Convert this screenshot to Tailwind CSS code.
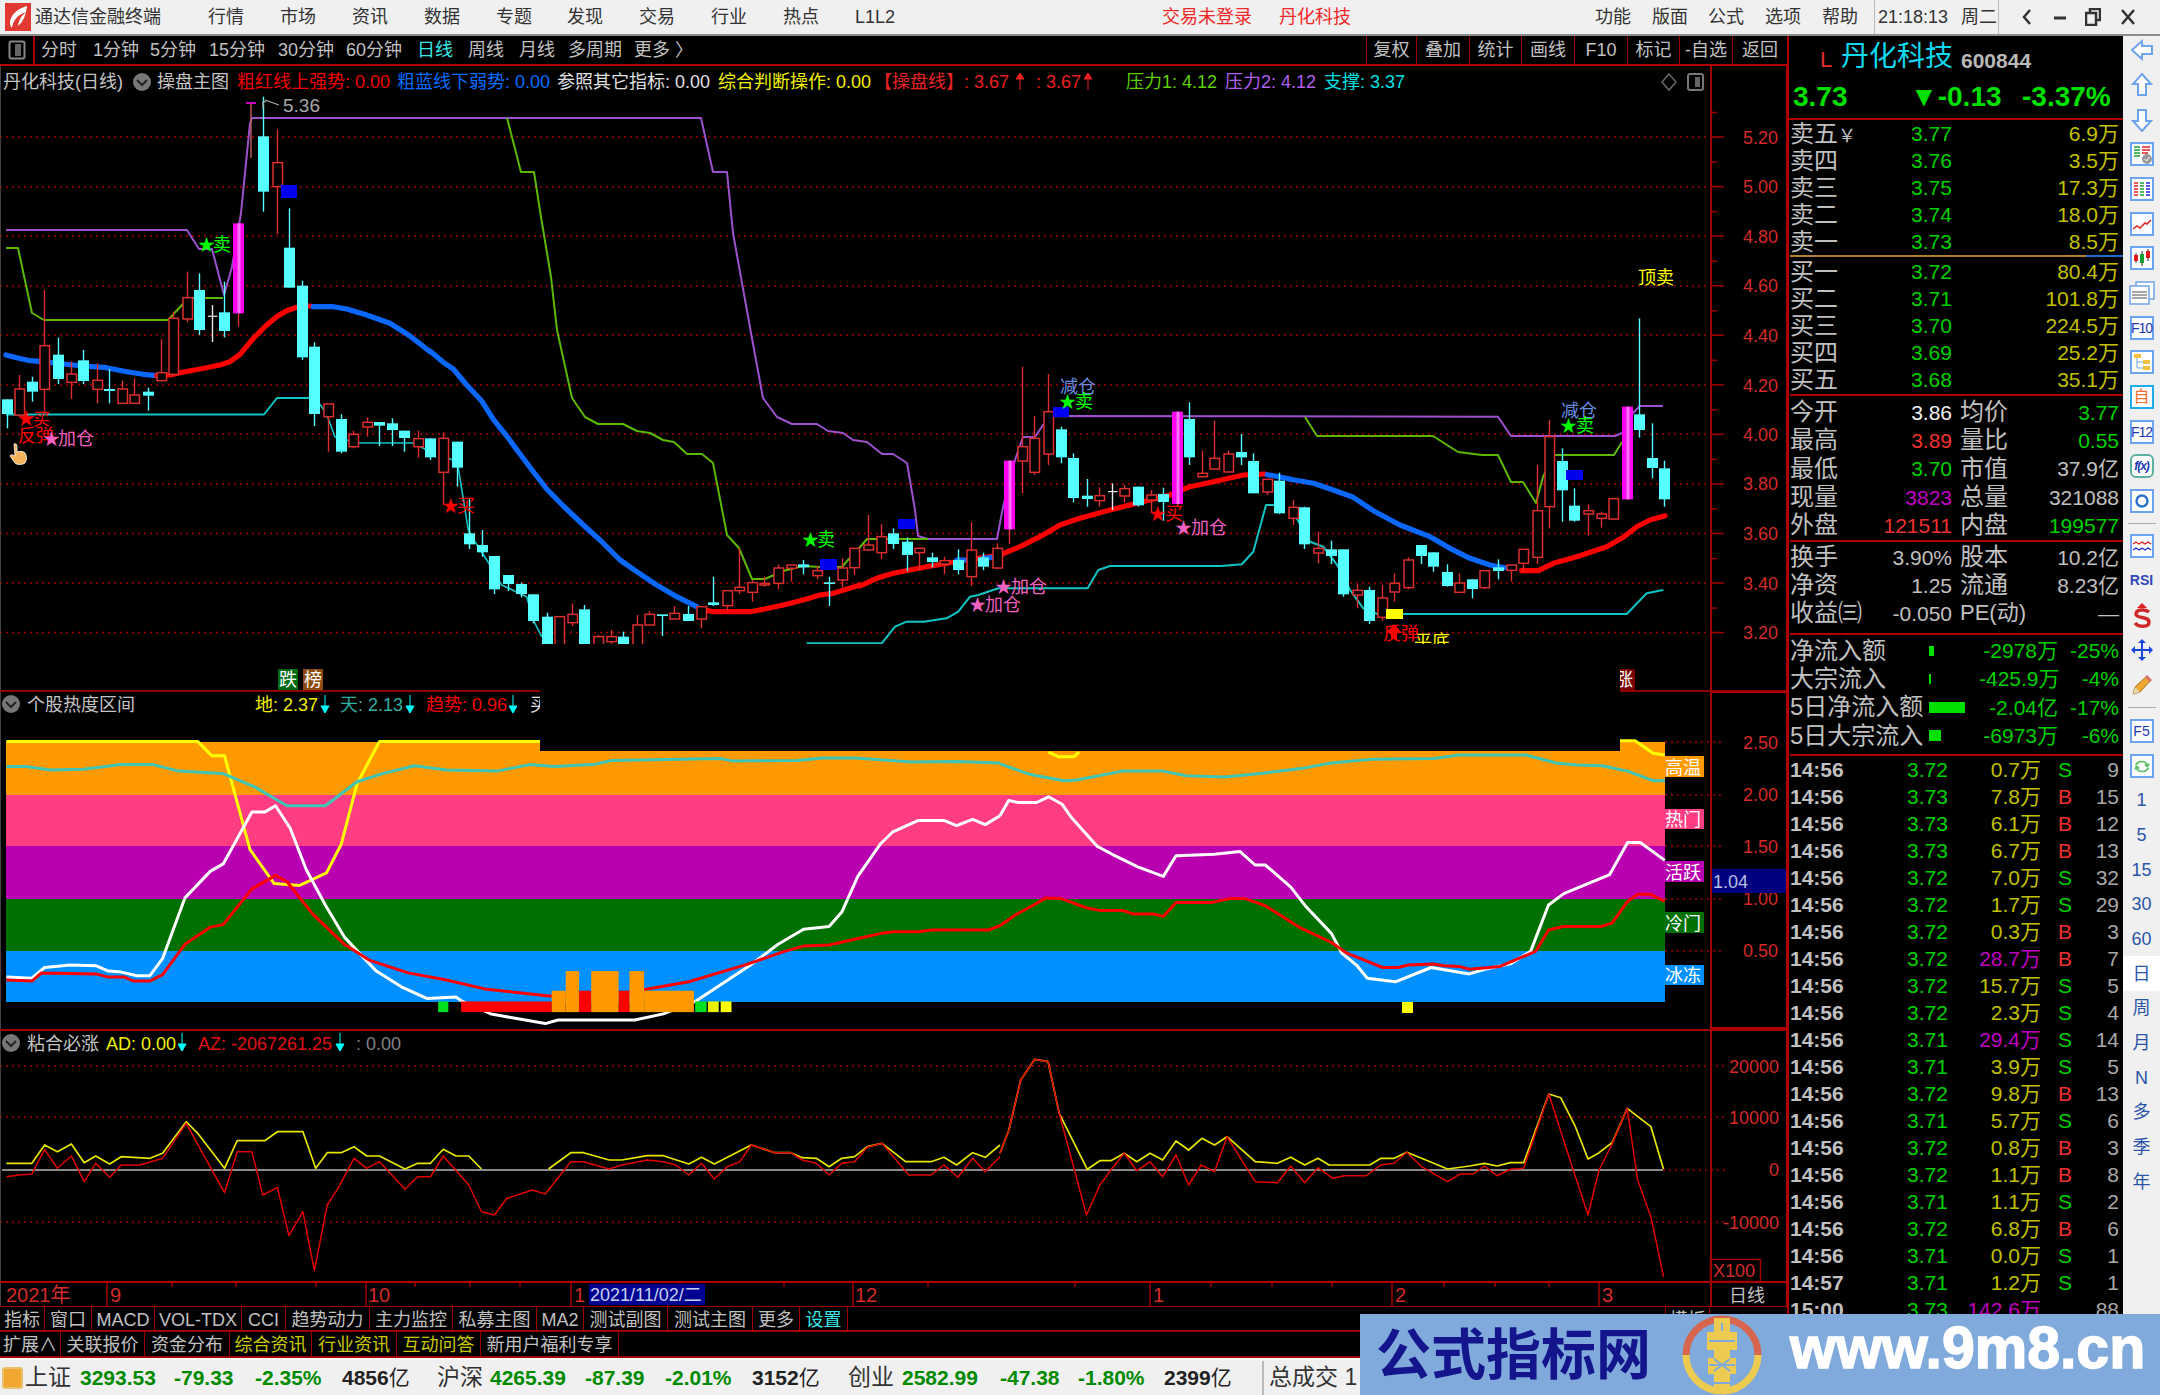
<!DOCTYPE html>
<html lang="zh">
<head>
<meta charset="utf-8">
<title>通达信金融终端</title>
<script src="https://cdn.jsdelivr.net/npm/@tailwindcss/browser@4"></script>
</head>
<body class="bg-black">
<div class="relative w-[2160px] h-[1395px] overflow-hidden bg-black flex flex-col leading-none font-['Liberation_Sans','Noto_Sans_CJK_SC',sans-serif] text-[18px] text-[#c0c0c0]">

  <!-- title bar -->
  <div class="h-[36px] shrink-0 bg-[#f0f0f0] border-b-2 border-[#8c8c8c] flex items-center text-[#333] relative">
    <svg class="ml-[5px] shrink-0" width="26" height="28" viewBox="0 0 26 28"><rect width="26" height="28" fill="#e03a32"/><path d="M22 3C12 6 5 12 5 20c0 2 1 4 2 5C8 18 12 12 21 9c-5 4-7 8-8 14 5-4 8-11 9-20z" fill="#fff"/></svg>
    <span class="ml-[4px] w-[173px]">通达信金融终端</span>
    <span class="w-[72px]">行情</span><span class="w-[72px]">市场</span><span class="w-[72px]">资讯</span><span class="w-[72px]">数据</span><span class="w-[71px]">专题</span><span class="w-[72px]">发现</span><span class="w-[72px]">交易</span><span class="w-[72px]">行业</span><span class="w-[72px]">热点</span><span class="w-[307px]">L1L2</span>
    <span class="w-[117px] text-[#f02828]">交易未登录</span><span class="w-[316px] text-[#f02828]">丹化科技</span>
    <span class="w-[57px]">功能</span><span class="w-[56px]">版面</span><span class="w-[57px]">公式</span><span class="w-[57px]">选项</span><span class="w-[52px]">帮助</span>
    <span class="h-[34px] border-l border-[#bbb] flex items-center pl-[3px] w-[125px] border-r"><span class="w-[83px]">21:18:13</span><span>周二</span></span>
    <svg class="ml-[22px]" width="12" height="18" viewBox="0 0 12 18"><path d="M9 2 3 9l6 7" fill="none" stroke="#333" stroke-width="2.5"/></svg>
    <svg class="ml-[20px]" width="14" height="18" viewBox="0 0 14 18"><path d="M1 10h12" stroke="#333" stroke-width="3"/></svg>
    <svg class="ml-[18px]" width="16" height="18" viewBox="0 0 16 18"><path d="M5 4V1h10v11h-3M1 5h10v12H1z" fill="none" stroke="#333" stroke-width="2.5"/></svg>
    <svg class="ml-[20px]" width="14" height="18" viewBox="0 0 14 18"><path d="M1 2l12 14M13 2 1 16" stroke="#333" stroke-width="2.5"/></svg>
  </div>

  <!-- middle -->
  <div class="h-[1322px] shrink-0 flex">
    <!-- left column -->
    <div class="w-[1787px] shrink-0 flex flex-col">
      <div class="h-[30px] shrink-0 border-b-2 border-[#b00000] flex items-center">
        <div class="w-[35px] h-[28px] border-r-2 border-[#a00000] flex items-center justify-center">
          <svg width="18" height="20" viewBox="0 0 18 20"><rect x="1.5" y="1.5" width="15" height="17" rx="2" fill="none" stroke="#888" stroke-width="2"/><rect x="7" y="4" width="6" height="12" fill="#666"/></svg>
        </div>
        <span class="ml-[6px] w-[52px]">分时</span><span class="w-[57px]">1分钟</span><span class="w-[59px]">5分钟</span><span class="w-[69px]">15分钟</span><span class="w-[68px]">30分钟</span><span class="w-[71px]">60分钟</span><span class="w-[51px] text-[#38e8e8]">日线</span><span class="w-[51px]">周线</span><span class="w-[49px]">月线</span><span class="w-[66px]">多周期</span><span class="w-[732px]">更多 〉</span>
        <span class="w-[50px] h-[28px] border-l border-[#a00000] flex items-center justify-center">复权</span><span class="w-[53px] h-[28px] border-l border-[#a00000] flex items-center justify-center">叠加</span><span class="w-[52px] h-[28px] border-l border-[#a00000] flex items-center justify-center">统计</span><span class="w-[53px] h-[28px] border-l border-[#a00000] flex items-center justify-center">画线</span><span class="w-[53px] h-[28px] border-l border-[#a00000] flex items-center justify-center">F10</span><span class="w-[52px] h-[28px] border-l border-[#a00000] flex items-center justify-center">标记</span><span class="w-[53px] h-[28px] border-l border-[#a00000] flex items-center justify-center">-自选</span><span class="w-[55px] h-[28px] border-l border-[#a00000] flex items-center justify-center">返回</span>
      </div>

      <!-- chart canvas -->
      <svg id="cv" class="block shrink-0" width="1787" height="1240" viewBox="0 66 1787 1240" font-size="18">
        <g id="grid"></g>
        <g id="main"></g>
        <!-- signals -->
        <g font-size="18">
          <text x="283" y="112" fill="#a8a8a8" font-size="19">5.36</text>
          <path d="M263 101v8M263 101l3 1M265 100l14 5" stroke="#aaa" stroke-width="1.3" fill="none"/>
          <text x="18" y="425" fill="#f00"><tspan x="17">★</tspan><tspan x="33" font-size="17">买</tspan></text>
          <text x="18" y="442" fill="#f00">反弹</text>
          <text fill="#f060c0" y="445"><tspan x="43" font-size="17">★</tspan><tspan x="58">加仓</tspan></text>
          <text fill="#00ff00" y="251"><tspan x="198" font-size="17">★</tspan><tspan x="213">卖</tspan></text>
          <text fill="#f00" y="512"><tspan x="442" font-size="17">★</tspan><tspan x="457">买</tspan></text>
          <text fill="#00ff00" y="546"><tspan x="802" font-size="17">★</tspan><tspan x="817">卖</tspan></text>
          <text fill="#f060c0" y="593"><tspan x="995" font-size="17">★</tspan><tspan x="1011">加仓</tspan></text>
          <text fill="#f060c0" y="611"><tspan x="969" font-size="17">★</tspan><tspan x="985">加仓</tspan></text>
          <text x="1060" y="393" fill="#6a8ce0">减仓</text>
          <text fill="#00ff00" y="408"><tspan x="1059" font-size="17">★</tspan><tspan x="1075">卖</tspan></text>
          <text fill="#f00" y="520"><tspan x="1149" font-size="17">★</tspan><tspan x="1165">买</tspan></text>
          <text fill="#f060c0" y="534"><tspan x="1175" font-size="17">★</tspan><tspan x="1191">加仓</tspan></text>
          <text x="1561" y="417" fill="#6a8ce0">减仓</text>
          <text fill="#00ff00" y="432"><tspan x="1560" font-size="17">★</tspan><tspan x="1576">卖</tspan></text>
          <text x="1638" y="284" fill="#ffff00">顶卖</text>
          <text x="1414" y="648" fill="#ffff00">平底</text>
          <text x="1383" y="640" fill="#f00">反弹</text>
          <path d="M1394 624l-8 9h5v6h6v-6h5z" fill="#f00"/>
          <path d="M14 444c2-1 3 0 3 3v5c3-1 6-1 8 1 2 3 2 7 0 10-3 2-8 2-10 0l-5-7c1-2 3-1 5 0z" fill="#f5b35a" stroke="#fff" stroke-width=".8"/>
        </g>

        <!-- chart headers -->
        <g font-size="18">
          <text x="3" y="88" fill="#c4c4c4">丹化科技(日线)</text>
          <circle cx="142" cy="82" r="9" fill="#777"/><path d="M137 80l5 5 5-5" fill="none" stroke="#222" stroke-width="2"/>
          <text x="157" y="88" fill="#c4c4c4">操盘主图</text>
          <text x="237" y="88" fill="#f00000">粗红线上强势: 0.00</text>
          <text x="397" y="88" fill="#0a6cff">粗蓝线下弱势: 0.00</text>
          <text x="557" y="88" fill="#e0e0e0">参照其它指标: 0.00</text>
          <text x="718" y="88" fill="#f0f000">综合判断操作: 0.00</text>
          <text x="874" y="88" fill="#e82020">【操盘线】: 3.67</text>
          <path d="M1020 74v16M1016 79l4-6 4 6z" stroke="#e82020" fill="#e82020"/>
          <text x="1036" y="88" fill="#e82020">: 3.67</text>
          <path d="M1088 74v16M1084 79l4-6 4 6z" stroke="#e82020" fill="#e82020"/>
          <text x="1126" y="88" fill="#5fd000">压力1: 4.12</text>
          <text x="1225" y="88" fill="#b060f0">压力2: 4.12</text>
          <text x="1324" y="88" fill="#00e0e0">支撑: 3.37</text>
          <path d="M1669 74l7 8-7 8-7-8z" fill="none" stroke="#666" stroke-width="1.5"/>
          <rect x="1688" y="74" width="15" height="16" rx="2" fill="none" stroke="#777" stroke-width="2"/><rect x="1695" y="77" width="5" height="10" fill="#666"/>

          <circle cx="11" cy="704" r="9" fill="#777"/><path d="M6 702l5 5 5-5" fill="none" stroke="#222" stroke-width="2"/>
          <text x="27" y="711" fill="#c4c4c4">个股热度区间</text>
          <text x="255" y="711" fill="#f0f000">地: 2.37</text>
          <path d="M325 695v17M321 706l4 7 4-7z" stroke="#0ff" fill="#0ff"/>
          <text x="340" y="711" fill="#30b0a0">天: 2.13</text>
          <path d="M410 695v17M406 706l4 7 4-7z" stroke="#0ff" fill="#0ff"/>
          <text x="426" y="711" fill="#f00000">趋势: 0.96</text>
          <path d="M513 695v17M509 706l4 7 4-7z" stroke="#0ff" fill="#0ff"/>
          <text x="530" y="711" fill="#e0e0e0">买</text>

          <circle cx="11" cy="1043" r="9" fill="#777"/><path d="M6 1041l5 5 5-5" fill="none" stroke="#222" stroke-width="2"/>
          <text x="27" y="1050" fill="#c4c4c4">粘合必涨</text>
          <text x="106" y="1050" fill="#f0f000">AD: 0.00</text>
          <path d="M182 1033v17M178 1044l4 7 4-7z" stroke="#0ff" fill="#0ff"/>
          <text x="198" y="1050" fill="#e01010">AZ: -2067261.25</text>
          <path d="M340 1033v17M336 1044l4 7 4-7z" stroke="#0ff" fill="#0ff"/>
          <text x="356" y="1050" fill="#808080">: 0.00</text>
        </g>

        <!-- y-axis labels -->
        <g fill="#d42a2a" font-size="18" text-anchor="end">
          <text x="1778" y="144">5.20</text><text x="1778" y="193">5.00</text><text x="1778" y="243">4.80</text><text x="1778" y="292">4.60</text><text x="1778" y="342">4.40</text><text x="1778" y="392">4.20</text><text x="1778" y="441">4.00</text><text x="1778" y="490">3.80</text><text x="1778" y="540">3.60</text><text x="1778" y="590">3.40</text><text x="1778" y="639">3.20</text>
          <text x="1778" y="749">2.50</text><text x="1778" y="801">2.00</text><text x="1778" y="853">1.50</text><text x="1778" y="905">1.00</text><text x="1778" y="957">0.50</text>
          <text x="1779" y="1073">20000</text><text x="1779" y="1124">10000</text><text x="1779" y="1176">0</text><text x="1779" y="1229">-10000</text>
        </g>
        <rect x="1712" y="869" width="74" height="24" fill="#000080"/>
        <text x="1713" y="888" fill="#b8c0e0" font-size="18">1.04</text>
        <rect x="1710.5" y="1259.5" width="50" height="22" fill="none" stroke="#a00000" stroke-width="1.5"/>
        <text x="1713" y="1277" fill="#d42a2a" font-size="18">X100</text>

        <!-- band labels -->
        <g font-size="18" fill="#fff">
          <rect x="1665" y="756" width="39" height="21" fill="#ff9900"/><text x="1665" y="774">高温</text>
          <rect x="1665" y="809" width="39" height="20" fill="#ff3d82"/><text x="1665" y="826">热门</text>
          <rect x="1665" y="861" width="39" height="21" fill="#b800b0"/><text x="1665" y="879">活跃</text>
          <rect x="1665" y="912" width="39" height="21" fill="#007000"/><text x="1665" y="930">冷门</text>
          <rect x="1665" y="965" width="39" height="20" fill="#0090ff"/><text x="1665" y="982">冰冻</text>
        </g>

        <!-- blackout + badges -->
        <rect x="540" y="644" width="1080" height="107" fill="#000"/>
        <rect x="278" y="669" width="20" height="21" fill="#006a10"/><text x="279" y="686" fill="#fff" font-size="18">跌</text>
        <rect x="303" y="669" width="20" height="21" fill="#8a4a10"/><text x="304" y="686" fill="#fff" font-size="18">榜</text>
        <rect x="1620" y="669" width="15" height="21" fill="#7a0000"/>
        <svg x="1620" y="660" width="15" height="40" viewBox="1620 660 15 40"><text x="1615" y="686" fill="#fff" font-size="18">涨</text></svg>

        <!-- time axis -->
        <g fill="#d42a2a" font-size="20">
          <text x="6" y="1302">2021年</text><text x="110" y="1302">9</text><text x="368" y="1302">10</text><text x="574" y="1302">1</text><text x="855" y="1302">12</text><text x="1153" y="1302">1</text><text x="1395" y="1302">2</text><text x="1602" y="1302">3</text>
        </g>
        <rect x="589" y="1284" width="116" height="21" fill="#000090"/>
        <text x="590" y="1301" fill="#c8d0f0" font-size="18">2021/11/02/二</text>
        <text x="1729" y="1302" fill="#c0c0c0" font-size="18">日线</text>
      </svg>

      <!-- tab bars -->
      <div class="h-[26px] shrink-0 border-b-2 border-t border-[#a00000] flex text-[18px]">
        <span class="w-[45px] h-full border-r border-[#a00000] flex items-center justify-center pt-[3px]">指标</span><span class="w-[47px] h-full border-r border-[#a00000] flex items-center justify-center pt-[3px]">窗口</span><span class="w-[63px] h-full border-r border-[#a00000] flex items-center justify-center pt-[3px]">MACD</span><span class="w-[87px] h-full border-r border-[#a00000] flex items-center justify-center pt-[3px]">VOL-TDX</span><span class="w-[44px] h-full border-r border-[#a00000] flex items-center justify-center pt-[3px]">CCI</span><span class="w-[84px] h-full border-r border-[#a00000] flex items-center justify-center pt-[3px]">趋势动力</span><span class="w-[83px] h-full border-r border-[#a00000] flex items-center justify-center pt-[3px]">主力监控</span><span class="w-[84px] h-full border-r border-[#a00000] flex items-center justify-center pt-[3px]">私募主图</span><span class="w-[47px] h-full border-r border-[#a00000] flex items-center justify-center pt-[3px]">MA2</span><span class="w-[84px] h-full border-r border-[#a00000] flex items-center justify-center pt-[3px]">测试副图</span><span class="w-[85px] h-full border-r border-[#a00000] flex items-center justify-center pt-[3px]">测试主图</span><span class="w-[47px] h-full border-r border-[#a00000] flex items-center justify-center pt-[3px]">更多</span><span class="w-[48px] h-full border-r border-[#a00000] flex items-center justify-center pt-[3px] text-[#38e8e8]">设置</span>
        <span class="w-[817px]"></span><span class="w-[45px] h-full border-x border-[#a00000] flex items-center justify-center pt-[3px]">模板</span>
      </div>
      <div class="h-[26px] shrink-0 border-b-2 border-[#a00000] flex text-[18px]">
        <span class="w-[61px] h-full border-r border-[#a00000] flex items-center justify-center pt-[2px]">扩展∧</span><span class="w-[84px] h-full border-r border-[#a00000] flex items-center justify-center pt-[2px]">关联报价</span><span class="w-[85px] h-full border-r border-[#a00000] flex items-center justify-center pt-[2px]">资金分布</span><span class="w-[82px] h-full border-r border-[#a00000] flex items-center justify-center pt-[2px] text-[#c8c800]">综合资讯</span><span class="w-[85px] h-full border-r border-[#a00000] flex items-center justify-center pt-[2px] text-[#c8c800]">行业资讯</span><span class="w-[84px] h-full border-r border-[#a00000] flex items-center justify-center pt-[2px] text-[#c8c800]">互动问答</span><span class="w-[138px] h-full border-r border-[#a00000] flex items-center justify-center pt-[2px]">新用户福利专享</span>
      </div>
    </div>

    <!-- quote panel -->
    <div class="w-[336px] shrink-0 border-l-2 border-[#b00000] pl-[1px] pr-[4px] flex flex-col text-[21px] overflow-hidden">
      <div class="h-[40px] shrink-0 flex items-end pb-[5px]">
        <span class="ml-[30px] w-[21px] text-[22px] text-[#e03030]">L</span><span class="text-[28px] text-[#10d8f0] w-[120px]">丹化科技</span><span class="text-[21px] font-bold text-[#b8b8b8]">600844</span>
      </div>
      <div class="h-[42px] shrink-0 flex items-center text-[28px] font-bold text-[#00e000]">
        <span class="ml-[3px] w-[117px]">3.73</span><span class="w-[112px]">▼-0.13</span><span>-3.37%</span>
      </div>
      <div class="h-[2px] shrink-0 -mx-[1px] -mr-[4px] bg-[#b00000]"></div>
      <div class="shrink-0">
        <div class="h-[27px] flex items-center"><span class="w-[121px] text-[24px]">卖五<span class="text-[18px]">￥</span></span><span class="w-[60px] text-[#00d000]">3.77</span><span class="flex-1 text-right text-[#c0c000]">6.9万</span></div>
        <div class="h-[27px] flex items-center"><span class="w-[121px] text-[24px]">卖四</span><span class="w-[60px] text-[#00d000]">3.76</span><span class="flex-1 text-right text-[#c0c000]">3.5万</span></div>
        <div class="h-[27px] flex items-center"><span class="w-[121px] text-[24px]">卖三</span><span class="w-[60px] text-[#00d000]">3.75</span><span class="flex-1 text-right text-[#c0c000]">17.3万</span></div>
        <div class="h-[27px] flex items-center"><span class="w-[121px] text-[24px]">卖二</span><span class="w-[60px] text-[#00d000]">3.74</span><span class="flex-1 text-right text-[#c0c000]">18.0万</span></div>
        <div class="h-[27px] flex items-center"><span class="w-[121px] text-[24px]">卖一</span><span class="w-[60px] text-[#00d000]">3.73</span><span class="flex-1 text-right text-[#c0c000]">8.5万</span></div>
      </div>
      <div class="h-[2px] shrink-0 -mr-[4px] bg-[linear-gradient(90deg,#b08030_89%,#1c6cd0_89%)]"></div>
      <div class="shrink-0 pt-[1px]">
        <div class="h-[27px] flex items-center"><span class="w-[121px] text-[24px]">买一</span><span class="w-[60px] text-[#00d000]">3.72</span><span class="flex-1 text-right text-[#c0c000]">80.4万</span></div>
        <div class="h-[27px] flex items-center"><span class="w-[121px] text-[24px]">买二</span><span class="w-[60px] text-[#00d000]">3.71</span><span class="flex-1 text-right text-[#c0c000]">101.8万</span></div>
        <div class="h-[27px] flex items-center"><span class="w-[121px] text-[24px]">买三</span><span class="w-[60px] text-[#00d000]">3.70</span><span class="flex-1 text-right text-[#c0c000]">224.5万</span></div>
        <div class="h-[27px] flex items-center"><span class="w-[121px] text-[24px]">买四</span><span class="w-[60px] text-[#00d000]">3.69</span><span class="flex-1 text-right text-[#c0c000]">25.2万</span></div>
        <div class="h-[27px] flex items-center"><span class="w-[121px] text-[24px]">买五</span><span class="w-[60px] text-[#00d000]">3.68</span><span class="flex-1 text-right text-[#c0c000]">35.1万</span></div>
      </div>
      <div class="h-[2px] mt-[1px] shrink-0 -mr-[4px] bg-[#b00000]"></div>
      <div class="shrink-0 pt-[2px]">
        <div class="h-[28.3px] flex items-center"><span class="w-[100px] text-[24px]">今开</span><span class="w-[62px] text-right text-[#f0f0f0]">3.86</span><span class="ml-[8px] w-[70px] text-[24px]">均价</span><span class="flex-1 text-right text-[#00d000]">3.77</span></div>
        <div class="h-[28.3px] flex items-center"><span class="w-[100px] text-[24px]">最高</span><span class="w-[62px] text-right text-[#f03030]">3.89</span><span class="ml-[8px] w-[70px] text-[24px]">量比</span><span class="flex-1 text-right text-[#00d000]">0.55</span></div>
        <div class="h-[28.3px] flex items-center"><span class="w-[100px] text-[24px]">最低</span><span class="w-[62px] text-right text-[#00d000]">3.70</span><span class="ml-[8px] w-[70px] text-[24px]">市值</span><span class="flex-1 text-right text-[#c0c0c0]">37.9亿</span></div>
        <div class="h-[28.3px] flex items-center"><span class="w-[100px] text-[24px]">现量</span><span class="w-[62px] text-right text-[#c000c0]">3823</span><span class="ml-[8px] w-[70px] text-[24px]">总量</span><span class="flex-1 text-right text-[#c0c0c0]">321088</span></div>
        <div class="h-[28.3px] flex items-center"><span class="w-[62px] text-[24px]">外盘</span><span class="w-[100px] text-right text-[#f03030]">121511</span><span class="ml-[8px] w-[70px] text-[24px]">内盘</span><span class="flex-1 text-right text-[#00d000]">199577</span></div>
      </div>
      <div class="h-[2px] mt-[1px] shrink-0 -mr-[4px] bg-[#b00000]"></div>
      <div class="shrink-0 pt-[1px] pb-[6px]">
        <div class="h-[28px] flex items-center"><span class="w-[100px] text-[24px]">换手</span><span class="w-[62px] text-right">3.90%</span><span class="ml-[8px] w-[70px] text-[24px]">股本</span><span class="flex-1 text-right">10.2亿</span></div>
        <div class="h-[28px] flex items-center"><span class="w-[100px] text-[24px]">净资</span><span class="w-[62px] text-right">1.25</span><span class="ml-[8px] w-[70px] text-[24px]">流通</span><span class="flex-1 text-right">8.23亿</span></div>
        <div class="h-[28px] flex items-center"><span class="w-[84px] text-[24px] whitespace-nowrap">收益㈢</span><span class="w-[78px] text-right">-0.050</span><span class="ml-[8px] w-[70px] text-[22px] whitespace-nowrap">PE(动)</span><span class="flex-1 text-right">—</span></div>
      </div>
      <div class="h-[2px] shrink-0 -mr-[4px] bg-[#b00000]"></div>
      <div class="shrink-0 pt-[1px] pb-[4px] text-[#00d000]">
        <div class="h-[28.3px] flex items-center"><span class="w-[139px] text-[24px] text-[#c0c0c0] whitespace-nowrap">净流入额</span><span class="w-[50px]"><i class="block w-[5px] h-[10px] bg-[#00e000]"></i></span><span class="w-[79px] text-right">-2978万</span><span class="flex-1 text-right">-25%</span></div>
        <div class="h-[28.3px] flex items-center"><span class="w-[139px] text-[24px] text-[#c0c0c0] whitespace-nowrap">大宗流入</span><span class="w-[50px]"><i class="block w-[2px] h-[10px] bg-[#00e000]"></i></span><span class="w-[79px] text-right whitespace-nowrap">-425.9万</span><span class="flex-1 text-right">-4%</span></div>
        <div class="h-[28.3px] flex items-center"><span class="w-[139px] text-[24px] text-[#c0c0c0] whitespace-nowrap">5日净流入额</span><span class="w-[50px]"><i class="block w-[36px] h-[11px] bg-[#00e000]"></i></span><span class="w-[79px] text-right">-2.04亿</span><span class="flex-1 text-right">-17%</span></div>
        <div class="h-[28.3px] flex items-center"><span class="w-[139px] text-[24px] text-[#c0c0c0] whitespace-nowrap">5日大宗流入</span><span class="w-[50px]"><i class="block w-[12px] h-[11px] bg-[#00e000]"></i></span><span class="w-[79px] text-right">-6973万</span><span class="flex-1 text-right">-6%</span></div>
      </div>
      <div class="h-[2px] shrink-0 -mr-[4px] bg-[#b00000]"></div>
      <div class="shrink-0 text-[#00d000]" id="ticks">
        <div class="h-[27px] flex items-center"><span class="w-[117px] font-bold text-[#c0c0c0]">14:56</span><span class="w-[60px]">3.72</span><span class="w-[74px] text-right text-[#c0c000]">0.7万</span><span class="w-[48px] text-center">S</span><span class="flex-1 text-right text-[#a8a8a8]">9</span></div>
        <div class="h-[27px] flex items-center"><span class="w-[117px] font-bold text-[#c0c0c0]">14:56</span><span class="w-[60px]">3.73</span><span class="w-[74px] text-right text-[#c0c000]">7.8万</span><span class="w-[48px] text-center text-[#f03030]">B</span><span class="flex-1 text-right text-[#a8a8a8]">15</span></div>
        <div class="h-[27px] flex items-center"><span class="w-[117px] font-bold text-[#c0c0c0]">14:56</span><span class="w-[60px]">3.73</span><span class="w-[74px] text-right text-[#c0c000]">6.1万</span><span class="w-[48px] text-center text-[#f03030]">B</span><span class="flex-1 text-right text-[#a8a8a8]">12</span></div>
        <div class="h-[27px] flex items-center"><span class="w-[117px] font-bold text-[#c0c0c0]">14:56</span><span class="w-[60px]">3.73</span><span class="w-[74px] text-right text-[#c0c000]">6.7万</span><span class="w-[48px] text-center text-[#f03030]">B</span><span class="flex-1 text-right text-[#a8a8a8]">13</span></div>
        <div class="h-[27px] flex items-center"><span class="w-[117px] font-bold text-[#c0c0c0]">14:56</span><span class="w-[60px]">3.72</span><span class="w-[74px] text-right text-[#c0c000]">7.0万</span><span class="w-[48px] text-center">S</span><span class="flex-1 text-right text-[#a8a8a8]">32</span></div>
        <div class="h-[27px] flex items-center"><span class="w-[117px] font-bold text-[#c0c0c0]">14:56</span><span class="w-[60px]">3.72</span><span class="w-[74px] text-right text-[#c0c000]">1.7万</span><span class="w-[48px] text-center">S</span><span class="flex-1 text-right text-[#a8a8a8]">29</span></div>
        <div class="h-[27px] flex items-center"><span class="w-[117px] font-bold text-[#c0c0c0]">14:56</span><span class="w-[60px]">3.72</span><span class="w-[74px] text-right text-[#c0c000]">0.3万</span><span class="w-[48px] text-center text-[#f03030]">B</span><span class="flex-1 text-right text-[#a8a8a8]">3</span></div>
        <div class="h-[27px] flex items-center"><span class="w-[117px] font-bold text-[#c0c0c0]">14:56</span><span class="w-[60px]">3.72</span><span class="w-[74px] text-right text-[#c000c0]">28.7万</span><span class="w-[48px] text-center text-[#f03030]">B</span><span class="flex-1 text-right text-[#a8a8a8]">7</span></div>
        <div class="h-[27px] flex items-center"><span class="w-[117px] font-bold text-[#c0c0c0]">14:56</span><span class="w-[60px]">3.72</span><span class="w-[74px] text-right text-[#c0c000]">15.7万</span><span class="w-[48px] text-center">S</span><span class="flex-1 text-right text-[#a8a8a8]">5</span></div>
        <div class="h-[27px] flex items-center"><span class="w-[117px] font-bold text-[#c0c0c0]">14:56</span><span class="w-[60px]">3.72</span><span class="w-[74px] text-right text-[#c0c000]">2.3万</span><span class="w-[48px] text-center">S</span><span class="flex-1 text-right text-[#a8a8a8]">4</span></div>
        <div class="h-[27px] flex items-center"><span class="w-[117px] font-bold text-[#c0c0c0]">14:56</span><span class="w-[60px]">3.71</span><span class="w-[74px] text-right text-[#c000c0]">29.4万</span><span class="w-[48px] text-center">S</span><span class="flex-1 text-right text-[#a8a8a8]">14</span></div>
        <div class="h-[27px] flex items-center"><span class="w-[117px] font-bold text-[#c0c0c0]">14:56</span><span class="w-[60px]">3.71</span><span class="w-[74px] text-right text-[#c0c000]">3.9万</span><span class="w-[48px] text-center">S</span><span class="flex-1 text-right text-[#a8a8a8]">5</span></div>
        <div class="h-[27px] flex items-center"><span class="w-[117px] font-bold text-[#c0c0c0]">14:56</span><span class="w-[60px]">3.72</span><span class="w-[74px] text-right text-[#c0c000]">9.8万</span><span class="w-[48px] text-center text-[#f03030]">B</span><span class="flex-1 text-right text-[#a8a8a8]">13</span></div>
        <div class="h-[27px] flex items-center"><span class="w-[117px] font-bold text-[#c0c0c0]">14:56</span><span class="w-[60px]">3.71</span><span class="w-[74px] text-right text-[#c0c000]">5.7万</span><span class="w-[48px] text-center">S</span><span class="flex-1 text-right text-[#a8a8a8]">6</span></div>
        <div class="h-[27px] flex items-center"><span class="w-[117px] font-bold text-[#c0c0c0]">14:56</span><span class="w-[60px]">3.72</span><span class="w-[74px] text-right text-[#c0c000]">0.8万</span><span class="w-[48px] text-center text-[#f03030]">B</span><span class="flex-1 text-right text-[#a8a8a8]">3</span></div>
        <div class="h-[27px] flex items-center"><span class="w-[117px] font-bold text-[#c0c0c0]">14:56</span><span class="w-[60px]">3.72</span><span class="w-[74px] text-right text-[#c0c000]">1.1万</span><span class="w-[48px] text-center text-[#f03030]">B</span><span class="flex-1 text-right text-[#a8a8a8]">8</span></div>
        <div class="h-[27px] flex items-center"><span class="w-[117px] font-bold text-[#c0c0c0]">14:56</span><span class="w-[60px]">3.71</span><span class="w-[74px] text-right text-[#c0c000]">1.1万</span><span class="w-[48px] text-center">S</span><span class="flex-1 text-right text-[#a8a8a8]">2</span></div>
        <div class="h-[27px] flex items-center"><span class="w-[117px] font-bold text-[#c0c0c0]">14:56</span><span class="w-[60px]">3.72</span><span class="w-[74px] text-right text-[#c0c000]">6.8万</span><span class="w-[48px] text-center text-[#f03030]">B</span><span class="flex-1 text-right text-[#a8a8a8]">6</span></div>
        <div class="h-[27px] flex items-center"><span class="w-[117px] font-bold text-[#c0c0c0]">14:56</span><span class="w-[60px]">3.71</span><span class="w-[74px] text-right text-[#c0c000]">0.0万</span><span class="w-[48px] text-center">S</span><span class="flex-1 text-right text-[#a8a8a8]">1</span></div>
        <div class="h-[27px] flex items-center"><span class="w-[117px] font-bold text-[#c0c0c0]">14:57</span><span class="w-[60px]">3.71</span><span class="w-[74px] text-right text-[#c0c000]">1.2万</span><span class="w-[48px] text-center">S</span><span class="flex-1 text-right text-[#a8a8a8]">1</span></div>
        <div class="h-[27px] flex items-center"><span class="w-[117px] font-bold text-[#c0c0c0]">15:00</span><span class="w-[60px]">3.73</span><span class="w-[74px] text-right text-[#c000c0]">142.6万</span><span class="w-[48px] text-center"></span><span class="flex-1 text-right text-[#a8a8a8]">88</span></div>
      </div>
    </div>

    <!-- right toolbar -->
    <div class="w-[37px] shrink-0 bg-[#f0f0f0] flex flex-col items-center text-[#2a55a8] text-[18px]">
      <div class="h-[28px] shrink-0 flex items-center justify-center"><svg width="24" height="22" viewBox="0 0 24 22"><path d="M2 11 12 2v5h10v8H12v5z" fill="#fff" stroke="#6ea4ee" stroke-width="2"/></svg></div>
      <div class="h-[3.5px] shrink-0"></div>
      <div class="h-[34.7px] shrink-0 flex items-center justify-center"><svg width="22" height="24" viewBox="0 0 22 24"><path d="M11 1 20 11h-5v11H7V11H2z" fill="#fff" stroke="#6ea4ee" stroke-width="2"/></svg></div>
      <div class="h-[34.7px] shrink-0 flex items-center justify-center"><svg width="22" height="24" viewBox="0 0 22 24"><path d="M11 23 20 13h-5V2H7v11H2z" fill="#fff" stroke="#6ea4ee" stroke-width="2"/></svg></div>
      <div class="h-[34.7px] shrink-0 flex items-center justify-center"><svg width="24" height="24" viewBox="0 0 24 24"><rect x="1" y="1" width="22" height="22" fill="#fff" stroke="#6ea4ee" stroke-width="2"/><path d="M4 5h6M4 8h6M4 11h6M4 14h6" stroke="#18a030" stroke-width="1.6"/><path d="M12 5h8M12 8h8M12 11h6" stroke="#e02020" stroke-width="1.6"/><circle cx="17" cy="17" r="5" fill="#999"/><path d="M14.5 17l2 2 3-4" stroke="#fff" fill="none"/></svg></div>
      <div class="h-[34.7px] shrink-0 flex items-center justify-center"><svg width="24" height="24" viewBox="0 0 24 24"><rect x="1" y="1" width="22" height="22" fill="#fff" stroke="#6ea4ee" stroke-width="2"/><path d="M4 6h4M4 9h4M4 12h4M4 15h4M4 18h4" stroke="#e02020" stroke-width="1.6"/><path d="M10 6h4M10 9h4M10 12h4M10 15h4M10 18h4" stroke="#18a030" stroke-width="1.6"/><path d="M16 6h4M16 9h4M16 12h4M16 15h4M16 18h4" stroke="#2020e0" stroke-width="1.6"/></svg></div>
      <div class="h-[34.7px] shrink-0 flex items-center justify-center"><svg width="24" height="24" viewBox="0 0 24 24"><rect x="1" y="1" width="22" height="22" fill="#fff" stroke="#6ea4ee" stroke-width="2"/><path d="M3 17l4-3 3 2 5-5 2 1 4-4" fill="none" stroke="#e02020" stroke-width="1.5"/></svg></div>
      <div class="h-[34.7px] shrink-0 flex items-center justify-center"><svg width="24" height="24" viewBox="0 0 24 24"><rect x="1" y="1" width="22" height="22" fill="#fff" stroke="#6ea4ee" stroke-width="2"/><path d="M6 7v10M12 5v15M18 3v12" stroke="#222"/><rect x="4" y="9" width="4" height="6" fill="#e01818"/><rect x="10" y="8" width="4" height="9" fill="#18a030"/><rect x="16" y="5" width="4" height="7" fill="#e01818"/></svg></div>
      <div class="h-[34.7px] shrink-0 flex items-center justify-center"><svg width="26" height="24" viewBox="0 0 26 24"><rect x="7" y="1" width="18" height="17" fill="#fff" stroke="#7aa8ea" stroke-width="1.6"/><rect x="1" y="5" width="19" height="18" fill="#fff" stroke="#7aa8ea" stroke-width="1.6"/><path d="M3 11h15M3 14h15M3 17h15" stroke="#888" stroke-width="1.6"/></svg></div>
      <div class="h-[34.7px] shrink-0 flex items-center justify-center"><span class="w-[24px] h-[24px] border-2 border-[#6ea4ee] bg-white flex items-center justify-center text-[14px] text-[#2038b0] tracking-[-1px]">F10</span></div>
      <div class="h-[34.7px] shrink-0 flex items-center justify-center"><svg width="24" height="24" viewBox="0 0 24 24"><rect x="1" y="1" width="22" height="22" fill="#fff" stroke="#6ea4ee" stroke-width="2"/><rect x="4" y="4" width="7" height="4" fill="#f0c040"/><rect x="13" y="10" width="7" height="4" fill="#f0c040"/><rect x="13" y="16" width="7" height="4" fill="#f0c040"/><path d="M7 8v10h6M7 12h6" fill="none" stroke="#6ea4ee"/></svg></div>
      <div class="h-[34.7px] shrink-0 flex items-center justify-center"><span class="w-[24px] h-[24px] border-2 border-[#22aaf0] bg-white flex items-center justify-center text-[16px] text-[#f07030]">自</span></div>
      <div class="h-[34.7px] shrink-0 flex items-center justify-center"><span class="w-[24px] h-[24px] border-2 border-[#6ea4ee] bg-white flex items-center justify-center text-[14px] text-[#2038b0] tracking-[-1px]">F12</span></div>
      <div class="h-[34.7px] shrink-0 flex items-center justify-center"><span class="w-[24px] h-[24px] rounded-[6px] border-2 border-[#60b0a0] bg-white flex items-center justify-center text-[12px] italic font-bold text-[#2038b0] tracking-[-1px]">f(x)</span></div>
      <div class="h-[34.7px] shrink-0 flex items-center justify-center"><svg width="24" height="24" viewBox="0 0 24 24"><rect x="1" y="1" width="22" height="22" fill="#fff" stroke="#6ea4ee" stroke-width="2"/><circle cx="12" cy="12" r="5.5" fill="none" stroke="#2b70d0" stroke-width="2.4"/></svg></div>
      <div class="h-[10px] shrink-0 w-[28px] flex items-center"><i class="block w-full h-[1px] bg-[#aaa]"></i></div>
      <div class="h-[34.7px] shrink-0 flex items-center justify-center"><svg width="24" height="24" viewBox="0 0 24 24"><rect x="1" y="1" width="22" height="22" fill="#fff" stroke="#6ea4ee" stroke-width="2"/><path d="M3 10l3-2 3 2 3-2 3 2 3-2 3 2" fill="none" stroke="#e02020" stroke-width="1.4"/><path d="M3 16l3-2 3 2 3-2 3 2 3-2 3 2" fill="none" stroke="#2030d0" stroke-width="1.4"/></svg></div>
      <div class="h-[34.7px] shrink-0 flex items-center justify-center text-[14px] font-bold text-[#3048b8]">RSI</div>
      <div class="h-[34.7px] shrink-0 flex items-center justify-center"><svg width="24" height="26" viewBox="0 0 24 26"><path d="M12 1 7 6h10z" fill="#e02020"/><path d="M19 10c-3-3-13-3-13 2s13 2 13 8-11 5-14 1" fill="none" stroke="#d02828" stroke-width="3.4"/></svg></div>
      <div class="h-[34.7px] shrink-0 flex items-center justify-center"><svg width="24" height="24" viewBox="0 0 24 24"><path d="M12 1l4 4h-3v6h6V8l4 4-4 4v-3h-6v6h3l-4 4-4-4h3v-6H5v3l-4-4 4-4v3h6V5H8z" fill="#1448d8"/></svg></div>
      <div class="h-[34.7px] shrink-0 flex items-center justify-center"><svg width="24" height="24" viewBox="0 0 24 24"><path d="M3 21l2-7L17 3l4 4L10 19z" fill="#f0a830" stroke="#a07020"/><path d="M3 21l2-7 5 5z" fill="#e8d8b0"/><path d="M15 4l5 5 2-2-5-5z" fill="#d87070"/></svg></div>
      <div class="h-[11.6px] shrink-0 w-[28px] flex items-center"><i class="block w-full h-[1px] bg-[#aaa]"></i></div>
      <div class="h-[34.7px] shrink-0 flex items-center justify-center"><span class="w-[24px] h-[24px] border-2 border-[#6ea4ee] bg-white flex items-center justify-center text-[14px] text-[#2038b0]">F5</span></div>
      <div class="h-[34.7px] shrink-0 flex items-center justify-center"><svg width="24" height="24" viewBox="0 0 24 24"><rect x="1" y="1" width="22" height="22" fill="#fff" stroke="#6ea4ee" stroke-width="2"/><path d="M5 11a7 6 0 0 1 13-1l2-1-2 5-4-3 2-1a5 4 0 0 0-9 1zM19 14a7 6 0 0 1-13 1l-2 1 2-5 4 3-2 1a5 4 0 0 0 9-1z" fill="#58c060"/></svg></div>
      <div class="h-[34.7px] shrink-0 flex items-center justify-center">1</div>
      <div class="h-[34.7px] shrink-0 flex items-center justify-center">5</div>
      <div class="h-[34.7px] shrink-0 flex items-center justify-center">15</div>
      <div class="h-[34.7px] shrink-0 flex items-center justify-center">30</div>
      <div class="h-[34.7px] shrink-0 flex items-center justify-center">60</div>
      <div class="h-[34.7px] shrink-0 w-full flex items-center justify-center bg-white">日</div>
      <div class="h-[34.7px] shrink-0 flex items-center justify-center">周</div>
      <div class="h-[34.7px] shrink-0 flex items-center justify-center">月</div>
      <div class="h-[34.7px] shrink-0 flex items-center justify-center">N</div>
      <div class="h-[34.7px] shrink-0 flex items-center justify-center">多</div>
      <div class="h-[34.7px] shrink-0 flex items-center justify-center">季</div>
      <div class="h-[34.7px] shrink-0 flex items-center justify-center">年</div>
    </div>
  </div>

  <!-- status bar -->
  <div class="h-[37px] shrink-0 bg-[#f0f0f0] border-t-2 border-[#f8f8f8] flex items-center text-[21px] text-[#008a00] font-semibold whitespace-nowrap">
    <span class="ml-[2px] w-[21px] h-[22px] rounded-[3px] bg-[#f0a830] border-2 border-[#e8c070] mr-[2px]"></span>
    <span class="w-[55px] text-[#333] font-normal text-[23px]">上证</span><span class="w-[94px]">3293.53</span><span class="w-[81px]">-79.33</span><span class="w-[87px]">-2.35%</span><span class="w-[95px] text-[#222]">4856<span class="font-normal">亿</span></span>
    <span class="w-[53px] text-[#333] font-normal text-[23px]">沪深</span><span class="w-[95px]">4265.39</span><span class="w-[80px]">-87.39</span><span class="w-[87px]">-2.01%</span><span class="w-[96px] text-[#222]">3152<span class="font-normal">亿</span></span>
    <span class="w-[54px] text-[#333] font-normal text-[23px]">创业</span><span class="w-[98px]">2582.99</span><span class="w-[78px]">-47.38</span><span class="w-[86px]">-1.80%</span><span class="w-[98px] text-[#222]">2399<span class="font-normal">亿</span></span>
    <span class="h-[34px] border-l-2 border-[#bbb] pl-[5px] flex items-center text-[#333] font-normal text-[23px]">总成交 1</span>
  </div>

  <!-- watermark overlay -->
  <div class="absolute left-[1360px] top-[1314px] w-[800px] h-[81px] bg-[#7faadb] flex items-center">
    <span class="ml-[16px] w-[306px] pb-[8px] text-[55px] font-bold text-[#14148c] font-['Noto_Sans_CJK_SC',sans-serif]">公式指标网</span>
    <svg class="-ml-[1px] shrink-0" width="82" height="80" viewBox="0 0 82 80">
      <path d="M5 40A36 36 0 0 1 77 40" fill="none" stroke="#d8664e" stroke-width="7"/>
      <path d="M5 40A36 36 0 0 0 77 40" fill="none" stroke="#eccb50" stroke-width="7"/>
      <path d="M33 3h16v14h7v18h-7v8h6v16h-6v18H33V59h-6V43h6v-8h-7V17h7z" fill="#eccb50"/>
      <path d="M28 26h26M41 8v8M28 50h26M33 44l16 12M49 44L33 56M33 68h16" stroke="#7faadb" stroke-width="2"/>
    </svg>
    <span class="ml-[27px] pb-[12px] text-[59px] font-bold text-white [-webkit-text-stroke:1.5px_white] font-['Liberation_Sans',sans-serif]">www.9m8.cn</span>
  </div>
</div>

<script>
const NS='http://www.w3.org/2000/svg';
function el(p,n,a){const e=document.createElementNS(NS,n);for(const k in a)e.setAttribute(k,a[k]);p.appendChild(e);return e;}
function pl(p,pts,x0,y0,sx,sy,c,w,extra){let s=[];for(let i=0;i<pts.length;i+=2)s.push((x0+pts[i]/sx).toFixed(1)+','+(y0+pts[i+1]/sy).toFixed(1));
  return el(p,'polyline',Object.assign({points:s.join(' '),fill:'none',stroke:c,'stroke-width':w,'stroke-linejoin':'round'},extra||{}));}
const g=document.getElementById('grid'), m=document.getElementById('main');
const DOT='#a80000';
function hdot(y,x1,x2){el(g,'line',{x1,x2,y1:y,y2:y,stroke:DOT,'stroke-width':1.5,'stroke-dasharray':'2 4'});}
[137,187,236,286,335,385,434,484,533.5,583,632.5].forEach(y=>hdot(y,0,1725));
[795,846,899,951].forEach(y=>hdot(y,1665,1725)); hdot(742,1665,1725);
[1066,1117,1222].forEach(y=>hdot(y,0,1725)); hdot(1170,1663,1725);
function seg(x1,y1,x2,y2,c,w){el(g,'line',{x1,y1,x2,y2,stroke:c,'stroke-width':w});}
seg(1711,66,1711,1306,'#a00000',2);
seg(1787,66,1787,1306,'#b00000',2);
seg(0,66,0,1306,'#444',2);
seg(0,691,1787,691,'#900000',2);
seg(1711,692,1787,692,'#b00000',2);seg(1711,1028,1787,1028,'#b00000',2);
seg(0,1030,1787,1030,'#a00000',2);
seg(0,1282,1787,1282,'#b00000',2);
for(let y=112.5;y<650;y+=49.56){seg(1711,y,1717,y,'#a00000',1.5);}
for(let y=137;y<650;y+=49.56){seg(1711,y,1722,y,'#a00000',1.5);}
[107,366,571,853,1150,1392,1599].forEach(x=>seg(x,1282,x,1306,'#a00000',1.5));
[172,236,316,415,470,520,680,784,928,1075,1211,1272,1332,1444,1495,1549].forEach(x=>seg(x,1282,x,1287,'#a00000',1.5));

const PUR='#9c52cc',GRN='#5cb800',CYN='#10c4c4';
pl(m,[6,230,187,230,199,249,212,249,224,295,232,267,241,213,250,123,252,118,701,118,713,172,727,172,733,233,751,333,763,398,777,417,792,424,817,424,828,431,843,433,853,440,860,441,867,442,882,454,893,454,907,463,915,510,918,536,928,539,997,539,1003,507,1015,460,1023,437,1035,437,1043,425,1053,416,1498,416.7,1511,436,1615,436,1622,433,1633,413,1640,406,1663,406],0,0,1,1,PUR,2);
pl(m,[6,248,18,248,32,313,44,320,168,320,182,305,187,298,223,298],0,0,1,1,GRN,2);
pl(m,[507,118,521,172,534,172,541,217,551,277,557,330,572,398,585,417,598,424,623,424,637,431,650,433,663,440,674,442,687,454,702,454,713,463,727,535,739,548,752,579,765,579,783,571,803,566,820,567,842,567,848,560,860,547,867,539,928,539],0,0,1,1,GRN,2);
pl(m,[1305,417,1317,436,1433,436,1458,452,1482,455,1498,455,1511,482,1523,482,1536,503,1543,477,1554,455,1614,455,1622,442],0,0,1,1,GRN,2);
pl(m,[6,414.5,264,414.5,277,398,309,398],0,0,1,1,CYN,2);
pl(m,[315,398,322,407,328,418,335,437,358,443,413,443,423,448,430,452],0,0,1,1,CYN,1.6);
pl(m,[55,385,82,395,115,600,135,635,180,705,215,765,290,800,310,870,335,920],430,330,3,3,CYN,1.6);
pl(m,[1130,940,1290,940],430,330,3,3,CYN,2);
pl(m,[0,940,65,940,105,890,140,875,190,875,260,865,295,845,330,800,355,795,415,775,683,775,715,720,750,708,1083,708,1145,703,1180,665,1218,525,1250,525],860,330,3,3,CYN,2);
pl(m,[20,655,60,725,100,740,145,800,180,870,220,925,262,942,1010,942,1070,880,1120,870],1290,300,3,3,CYN,2);

const BL='#0a68ff',RD='#ff0000';
function thick(pts,x0,y0,c){pl(m,pts,x0,y0,3,3,c,5.2,{'stroke-linecap':'round'});}
thick([18,795,50,803,90,812,130,815,190,822,250,828,320,833,380,845,430,853,470,857],0,90,BL);
thick([470,857,510,855,540,848,600,837,660,825,690,815,720,793,760,745,800,705,830,680,860,662,890,652,930,648],0,90,RD);
thick([940,650,1000,650,1040,657,1100,675,1170,700,1230,738,1290,785],0,90,BL);
thick([0,63,40,97,70,117,110,165,155,213,190,268,230,318,270,372,310,425,350,477,400,528,460,585,510,630,570,690,620,725,680,765,740,800,800,830],430,330,BL);
thick([815,838,850,845,960,845,1000,838,1060,825,1120,810,1170,795,1210,790,1290,765],430,330,RD);
thick([0,768,50,745,100,730,200,710,320,690,420,675,480,650,540,620,600,585,660,565,750,540,830,520,930,495,990,470,1060,455,1150,435,1215,432],860,330,RD);
thick([290,690,315,690],860,330,BL);thick([370,685,395,682],860,330,BL);
thick([1222,434,1290,447],860,330,BL);
thick([0,538,70,550,130,570,190,592,250,632,330,675,420,710,480,745,540,775,600,795,645,803],1290,300,BL);
thick([695,812,745,812,790,790,860,770,950,740,1000,712,1040,680,1080,660,1125,647],1290,300,RD);

const C=[
[0,90,[[20,928,928,972,1015,'c'],[56,855,897,975,975,'r'],[96,860,875,905,935,'c'],[133,600,767,898,975,'r'],[173,743,794,867,882,'c'],[213,815,852,877,927,'r'],[250,780,811,873,882,'c'],[290,820,871,898,940,'r'],[326,838,897,903,940,'c'],[366,872,897,940,940,'r'],[402,865,915,940,940,'r'],[443,893,905,917,962,'c'],[483,748,848,872,872,'r'],[519,665,685,853,860,'r'],[560,545,623,687,697,'r'],[596,550,600,720,735,'c'],[636,645,677,680,756,'w'],[673,575,667,723,742,'c'],[713,400,400,670,710,'m'],[790,20,139,305,365,'c'],[830,118,218,290,432,'r'],[867,355,473,593,593,'c'],[906,572,587,802,810,'c'],[943,757,770,972,1008,'c'],[983,942,942,980,1085,'r'],[1023,973,987,1085,1090,'c'],[1060,1022,1033,1070,1075,'r'],[1100,982,997,1011,1040,'r'],[1136,996,996,1007,1068,'c'],[1176,985,1000,1020,1068,'c'],[1212,1022,1022,1044,1085,'c'],[1253,1022,1046,1070,1103,'r'],[1290,1045,1045,1102,1110,'c']]],
[430,330,[[40,307,325,427,525,'r'],[80,335,335,413,470,'c'],[117,505,610,643,657,'c'],[156,600,645,667,680,'c'],[193,678,678,778,792,'c'],[233,735,735,762,783,'c'],[273,758,762,792,802,'c'],[310,793,793,873,880,'c'],[350,848,860,950,950,'c'],[386,860,860,950,950,'r'],[426,820,853,878,888,'r'],[463,825,838,950,950,'c'],[503,915,920,950,950,'r'],[543,900,920,935,942,'r'],[580,905,920,950,950,'c'],[620,855,885,950,950,'r'],[656,843,853,885,885,'r'],[696,855,853,858,918,'c'],[733,828,850,867,867,'r'],[773,828,852,873,873,'c'],[813,830,830,867,895,'r'],[850,740,817,825,828,'c'],[890,780,782,827,845,'r'],[927,655,772,782,792,'r'],[966,750,758,787,815,'r'],[1003,740,760,765,770,'r'],[1043,703,714,760,778,'r'],[1083,705,705,715,755,'r'],[1120,690,703,712,733,'c'],[1160,708,722,737,748,'r'],[1196,740,757,762,828,'c'],[1237,685,714,750,772,'r'],[1272,655,655,713,735,'r']]],
[860,330,[[23,555,645,660,662,'r'],[63,582,620,668,688,'r'],[100,595,610,642,657,'c'],[140,622,635,675,723,'c'],[176,655,655,668,720,'r'],[216,668,682,696,712,'c'],[253,680,692,702,733,'r'],[293,658,690,720,733,'c'],[333,577,660,740,768,'r'],[370,668,682,710,720,'c'],[410,640,655,714,718,'r'],[447,392,392,598,642,'m'],[487,110,350,393,490,'r'],[523,258,325,427,435,'r'],[563,132,245,372,405,'r'],[603,290,298,382,400,'c'],[640,370,384,504,517,'c'],[680,447,497,507,530,'c'],[716,472,497,512,530,'r'],[755,460,483,485,540,'w'],[793,465,476,498,518,'r'],[833,470,470,526,530,'c'],[873,480,495,510,548,'r'],[910,473,492,516,572,'c'],[950,245,245,522,530,'m'],[986,217,267,382,405,'c'],[1026,362,430,440,440,'r'],[1063,272,385,417,417,'r'],[1103,362,372,426,426,'r'],[1143,312,366,382,405,'c'],[1180,370,393,490,490,'c'],[1220,448,448,486,495,'r'],[1257,428,452,550,552,'c']]],
[1290,300,[[10,600,622,655,675,'r'],[43,620,622,733,747,'c'],[83,695,745,759,790,'r'],[123,722,748,768,792,'c'],[160,748,748,883,890,'c'],[200,852,871,885,925,'r'],[236,860,870,963,972,'c'],[276,855,894,952,962,'r'],[313,820,850,876,905,'r'],[353,772,780,863,868,'r'],[393,735,735,768,792,'c'],[430,757,757,800,815,'c'],[470,793,816,858,860,'c'],[506,820,849,877,877,'r'],[546,838,838,867,895,'c'],[582,812,812,863,867,'r'],[623,778,802,813,838,'c'],[663,795,795,811,845,'r'],[700,748,748,790,815,'r'],[740,495,632,772,792,'r'],[776,360,410,620,685,'r'],[816,445,483,571,665,'c'],[853,565,617,662,665,'c'],[893,613,632,642,707,'r'],[933,635,642,655,683,'r'],[970,596,596,657,660,'r'],[1010,320,320,598,598,'m'],[1046,55,343,390,413,'c'],[1086,370,474,504,535,'c'],[1123,482,505,598,620,'c']]]];
const CY='#55ffff',RC='#dc2e2e';
C.forEach(([x0,y0,list])=>list.forEach(([zx,h,t,b,l,ty])=>{
  const x=Math.round(x0+zx/3)+.5,Y=v=>y0+v/3;
  const wc=ty==='c'?CY:ty==='w'?'#e8e8e8':RC;
  el(m,'line',{x1:x,x2:x,y1:Y(h),y2:Y(l),stroke:wc,'stroke-width':1.4});
  if(ty==='c')el(m,'rect',{x:x-5.5,y:Y(t),width:11,height:Math.max(Y(b)-Y(t),1.5),fill:CY});
  else if(ty==='r')el(m,'rect',{x:x-4.5,y:Y(t),width:9.5,height:Math.max(Y(b)-Y(t),1.5),fill:'#000',stroke:RC,'stroke-width':1.5});
  else if(ty==='w')el(m,'rect',{x:x-4.5,y:Y(t),width:9.5,height:Math.max(Y(b)-Y(t),1.2),fill:'#e8e8e8'});
  else{el(m,'rect',{x:x-5.5,y:Y(t),width:11,height:Y(b)-Y(t),fill:'#ff00f0'});el(m,'rect',{x:x-1,y:Y(t),width:3,height:Y(b)-Y(t),fill:'#ff70ff'});}
}));
el(m,'line',{x1:251,x2:251,y1:103,y2:158,stroke:'#c86060','stroke-width':1.4});
el(m,'line',{x1:246,x2:256,y1:103,y2:103,stroke:'#ff00f0','stroke-width':1.6});
[[281,185,16,13,'#0000f0'],[820,559,17,11,'#0000f0'],[898,519,17,10,'#0000f0'],[1053,407,16,10,'#0000f0'],[1566,470,17,10,'#0000f0'],[1386,609,17,10,'#ffff00']].forEach(([x,y,w,h,f])=>el(m,'rect',{x,y,width:w,height:h,fill:f}));

[[742,53,'#ff9900'],[795,51,'#ff3d82'],[846,53,'#b800b0'],[899,52,'#007000'],[951,51,'#0090ff']].forEach(([y,h,f])=>el(m,'rect',{x:6,y,width:1659,height:h,fill:f}));
const X3=1.568,Y3=2.8,Y0=480,X4=1.96,X0=1000;
pl(m,[10,732,310,732,332,772,352,772,392,1035,430,1130,470,1135,512,1100,535,1020,560,850,595,732,847,732],0,Y0,X3,Y3,'#ffff00',3);
pl(m,[95,762,115,775,145,775,155,762],X0,Y0,X4,Y3,'#ffff00',3);
pl(m,[1215,730,1245,730,1280,765,1303,770],X0,Y0,X4,Y3,'#ffff00',3);
pl(m,[10,802,40,802,80,812,130,810,190,797,240,797,280,815,350,822,400,860,450,912,510,912,560,845,600,822,650,800,700,812,780,815,830,797,870,802,930,797,960,785,1130,780,1150,787,1250,785,1290,778,1340,778,1430,790,1500,788,1568,792],0,Y0,X3,Y3,'#40c4b4',3);
pl(m,[0,795,60,825,125,842,150,840,240,815,320,815,365,828,440,832,520,820,590,808,650,792,730,782,850,780,900,770,1030,770,1090,792,1130,798,1180,800,1230,815,1280,842,1303,842],X0,Y0,X4,Y3,'#40c4b4',3);
pl(m,[10,1392,50,1395,70,1365,110,1358,150,1360,170,1375,190,1378,215,1388,235,1388,255,1340,290,1170,330,1095,350,1075,395,930,415,930,432,912,455,975,480,1090,510,1190,540,1280,590,1375,630,1420,670,1452,715,1448,725,1460,770,1495,810,1508,855,1522,875,1512,995,1512,1040,1495,1090,1460,1175,1360,1220,1300,1260,1258,1300,1250,1320,1210,1345,1110,1380,1020,1400,985,1440,953,1480,953,1500,968,1525,950,1545,965,1568,940],0,Y0,X3,Y3,'#fff',3);
pl(m,[0,940,17,897,35,903,72,903,95,887,122,908,140,945,190,1025,220,1048,270,1083,320,1110,345,1052,420,1048,470,1040,500,1078,520,1078,570,1140,600,1195,650,1270,670,1325,700,1360,720,1395,775,1405,845,1365,920,1383,950,1370,1000,1355,1040,1320,1075,1190,1105,1158,1195,1105,1230,1015,1255,1015,1303,1065],X0,Y0,X4,Y3,'#fff',3);
pl(m,[10,1400,50,1403,65,1380,150,1383,170,1392,195,1392,210,1403,235,1403,255,1385,290,1300,330,1252,350,1245,395,1145,432,1107,450,1125,490,1215,540,1300,580,1345,640,1380,700,1400,760,1425,860,1445,950,1445,1000,1430,1080,1405,1170,1357,1230,1320,1260,1305,1300,1302,1380,1270,1400,1265,1440,1265,1460,1260,1550,1260,1568,1248],0,Y0,X3,Y3,'#ff0000',3);
pl(m,[0,1248,30,1218,60,1195,90,1170,120,1172,170,1198,195,1205,240,1205,260,1215,300,1215,320,1222,345,1183,415,1183,450,1172,480,1172,520,1192,590,1255,650,1295,680,1325,750,1365,780,1365,800,1358,850,1355,870,1360,900,1362,920,1370,980,1362,1050,1320,1075,1260,1105,1250,1180,1250,1200,1240,1230,1180,1250,1160,1275,1160,1303,1180],X0,Y0,X4,Y3,'#ff0000',3);
function bar(zx1,zx2,zy1,zy2,f){el(m,'rect',{x:zx1/X3,y:Y0+zy1/Y3,width:(zx2-zx1)/X3,height:(zy2-zy1)/Y3,fill:f});}
bar(723,865,1460,1490,'#ff0000');bar(908,927,1430,1490,'#ff0000');bar(970,987,1430,1490,'#ff0000');
bar(865,887,1430,1490,'#ff9900');bar(887,908,1375,1490,'#ff9900');bar(927,970,1375,1490,'#ff9900');bar(987,1010,1375,1490,'#ff9900');bar(1010,1088,1430,1490,'#ff9900');
bar(687,703,1460,1490,'#00e020');bar(1090,1108,1460,1490,'#00e020');bar(1110,1127,1460,1490,'#e8f000');bar(1130,1147,1460,1490,'#ffff00');
el(m,'rect',{x:1402,y:1002,width:11,height:11,fill:'#ffff00'});

const Y5=1030;
const YEL='#e6e600',AZ='#e00000';
el(m,'line',{x1:2,x2:1663,y1:1170,y2:1170,stroke:'#8a8a8a','stroke-width':2});
const yl=[10,400,50,400,70,345,90,365,112,342,132,398,150,378,172,402,190,380,235,385,255,370,292,275,310,310,352,415,372,332,415,332,435,305,475,305,495,415,513,368,535,368,555,350,575,378,595,378,635,417,655,400,675,400,695,358,715,378,735,378,755,417];
pl(m,yl,0,Y5,1.568,3,YEL,1.7);
pl(m,[860,417,895,368,915,368,955,390,975,390,1015,377,1040,377,1080,402,1100,382,1120,402,1178,345,1215,368,1240,368,1258,383,1280,385,1300,410,1320,385,1340,380,1360,350,1383,340,1420,395,1460,395,1480,382,1500,405,1525,368,1545,382,1568,345],0,Y5,1.568,3,YEL,1.7);
pl(m,[0,370,12,300,28,150,47,88,65,95,80,250,118,418,135,392,150,392,168,370,185,395,203,370,220,390,238,333,255,360,273,325,290,345,307,320,345,395,375,400,393,382,412,405,430,385,445,405,500,405,515,385,533,385,550,367,570,385,605,417,635,408,655,400,672,408,690,398,708,398,742,192,758,203,778,290,795,387,810,368,828,337,848,235,880,290,897,417],1000,Y5,1.352,3,YEL,1.7);
pl(m,[10,440,30,435,50,432,70,358,90,415,112,378,132,455,150,400,172,442,190,405,220,405,255,385,292,280,352,488,372,365,395,365,412,495,435,472,453,617,475,545,493,722,513,525,530,475,555,385,575,415,595,395,635,478,655,440,675,440,695,378,735,465,755,545,775,555,795,505,835,480,855,492,895,395,915,395,955,417,975,405,1015,390,1040,395,1060,405,1080,435,1100,400,1120,447,1140,410,1160,395,1178,345,1215,368,1240,368,1258,390,1280,400,1300,435,1320,400,1340,395,1360,352,1383,340,1425,435,1460,435,1480,405,1502,442,1525,385,1545,425,1568,380],0,Y5,1.568,3,AZ,1.5);
pl(m,[0,370,12,300,28,150,47,88,65,95,80,250,117,555,135,465,150,420,168,370,185,422,203,395,220,440,238,375,255,465,272,405,290,425,307,320,345,455,375,458,393,408,412,458,430,413,450,445,465,437,495,437,515,405,533,400,550,367,570,410,605,455,622,432,640,432,655,408,672,437,690,418,708,415,742,192,775,420,795,555,810,420,828,340,848,235,862,450,880,560,897,740],1000,Y5,1.352,3,AZ,1.5);
</script>
</body>
</html>
